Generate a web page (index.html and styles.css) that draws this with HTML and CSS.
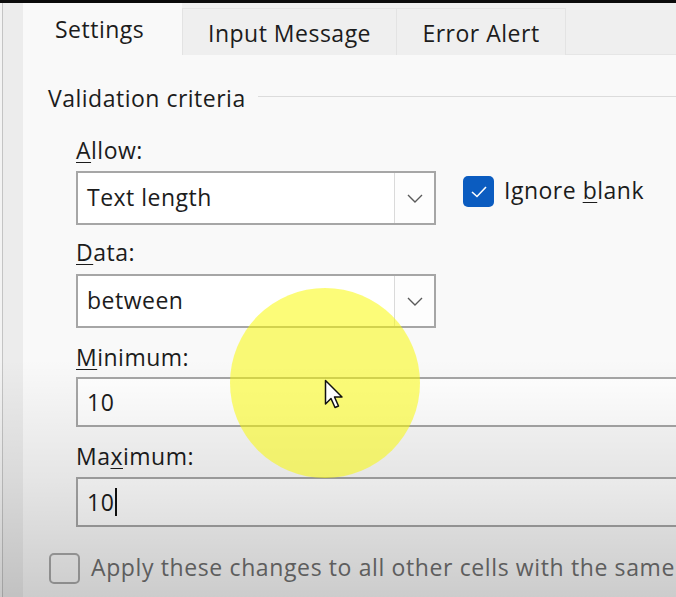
FILE: index.html
```html
<!DOCTYPE html>
<html>
<head>
<meta charset="utf-8">
<link rel="stylesheet" href="styles.css">
</head>
<body>
<div class="app">
  <div class="gutter"></div>
  <div class="main">
    <div class="tabs">
      <div class="tab active">Settings</div>
      <div class="tab tab-input">Input Message</div>
      <div class="tab tab-error">Error Alert</div>
      <div class="tab-fill"></div>
    </div>
    <div class="panel">
      <div class="legend"><span class="legend-text">Validation criteria</span><span class="legend-line"></span></div>
      <div class="form">
        <div class="label"><u>A</u>llow:</div>
        <div class="row">
          <div class="select"><span class="select-value">Text length</span><span class="drop"><svg width="16" height="9" viewBox="0 0 16 9"><path d="M1 1 L8 8 L15 1" fill="none" stroke="#5a5a5a" stroke-width="1.4"/></svg></span></div>
          <div class="check-wrap">
            <span class="check on"><svg width="18" height="13" viewBox="0 0 18 13"><path d="M2 7 L7 11.5 L16 2" fill="none" stroke="#fff" stroke-width="1.6"/></svg></span>
            <span class="check-label">Ignore <u>b</u>lank</span>
          </div>
        </div>
        <div class="label label-data"><u>D</u>ata:</div>
        <div class="row">
          <div class="select"><span class="select-value">between</span><span class="drop"><svg width="16" height="9" viewBox="0 0 16 9"><path d="M1 1 L8 8 L15 1" fill="none" stroke="#5a5a5a" stroke-width="1.4"/></svg></span></div>
        </div>
        <div class="label label-min"><u>M</u>inimum:</div>
        <div class="input"><span class="input-value">10</span></div>
        <div class="label label-max">Ma<u>x</u>imum:</div>
        <div class="input"><span class="input-value">10</span><span class="caret"></span></div>
      </div>
      <div class="apply">
        <span class="check off"></span>
        <span class="apply-label">Apply these changes to all other cells with the same</span>
      </div>
    </div>
  </div>
  <div class="shade"></div>
  <div class="spot"></div>
  <svg class="pointer" width="24" height="34" viewBox="0 0 24 34"><path d="M1.5 1.5 L1.5 25 L7 19.5 L11 28.5 L14.5 27 L10.5 18 L18 18 Z" fill="#fff" stroke="#111" stroke-width="1.5" stroke-linejoin="round"/></svg>
</div>
</body>
</html>
```

FILE: styles.css
```css
* { box-sizing: border-box; }
html, body { margin: 0; padding: 0; }
body {
  width: 676px;
  height: 597px;
  overflow: hidden;
  background: #0b0b0b;
  font-family: "Open Sans", "Noto Sans", sans-serif;
  color: #1c1c1c;
  letter-spacing: 0.5px;
}
.app {
  position: relative;
  display: flex;
  margin-top: 3px;
  height: 594px;
  overflow: hidden;
}
.gutter {
  width: 23px;
  flex: none;
  background: #ececec;
  border-left: 2px solid #f3f3f3;
  box-shadow: inset 1px 0 0 #c4c4c4;
}
.main {
  flex: 1;
  display: flex;
  flex-direction: column;
  min-width: 0;
}
.tabs {
  height: 52px;
  display: flex;
  align-items: flex-end;
  background: #efefef;
  flex: none;
}
.tab {
  height: 47px;
  display: flex;
  align-items: center;
  justify-content: center;
  font-size: 23px;
  background: #efefef;
  border: 1px solid #e3e3e3;
  border-bottom: none;
  padding-top: 2px;
}
.tab.active {
  width: 159px;
  height: 52px;
  background: #f9f9f9;
  border: none;
  justify-content: flex-start;
  padding-left: 32px;
  padding-top: 0;
}
.tab-input { width: 215px; }
.tab-error { width: 169px; border-left: none; }
.tab-fill {
  flex: 1;
  height: 1px;
  background: #e6e6e6;
}
.panel {
  flex: 1;
  background: #f9f9f9;
  padding: 28px 0 0 25px;
}
.legend {
  display: flex;
  align-items: center;
  height: 30px;
}
.legend-text {
  font-size: 23px;
  line-height: 30px;
  white-space: nowrap;
}
.legend-line {
  flex: 1;
  margin-left: 12px;
  margin-top: -3px;
  border-top: 1px solid #dcdcdc;
}
.form {
  padding-left: 28px;
  padding-top: 22px;
  display: flex;
  flex-direction: column;
}
.label {
  font-size: 23px;
  line-height: 30px;
  height: 30px;
  margin-bottom: 6px;
}
.label u, .check-label u { text-decoration-thickness: 1px; text-underline-offset: 3px; }
.label-data { margin-top: 12px; margin-bottom: 7px; }
.label-min { margin-top: 14px; margin-bottom: 5px; }
.label-max { margin-top: 14px; margin-bottom: 6px; }
.row {
  display: flex;
  align-items: flex-start;
}
.select {
  width: 360px;
  height: 54px;
  border: 2px solid #a6a6a6;
  background: #fff;
  display: flex;
  align-items: stretch;
}
.select-value {
  flex: 1;
  font-size: 23px;
  display: flex;
  align-items: center;
  padding-left: 9px;
  padding-bottom: 2px;
}
.drop {
  width: 40px;
  border-left: 1px solid #dadada;
  display: flex;
  align-items: center;
  justify-content: center;
  background: #fdfdfd;
}
.check-wrap {
  display: flex;
  align-items: center;
  margin-left: 27px;
  margin-top: 3px;
}
.check {
  width: 31px;
  height: 31px;
  border-radius: 5px;
  display: inline-flex;
  align-items: center;
  justify-content: center;
  flex: none;
}
.check.on { background: #0b5cc0; }
.check.off {
  border: 2px solid #a9a9a9;
  background: transparent;
}
.check-label {
  font-size: 23px;
  margin-left: 10px;
  padding-bottom: 2px;
}
.input {
  width: 640px;
  height: 50px;
  border: 2px solid #a6a6a6;
  border-right: none;
  background: #fff;
  display: flex;
  align-items: center;
  padding-left: 9px;
  font-size: 23px;
}
.caret {
  width: 2px;
  height: 28px;
  background: #111;
  margin-left: 1px;
}
.apply {
  display: flex;
  align-items: center;
  margin-top: 24px;
  margin-left: 1px;
}
.apply-label {
  font-size: 23px;
  color: #6f6f6f;
  margin-left: 11px;
  white-space: nowrap;
  padding-bottom: 2px;
  letter-spacing: 0.62px;
}
.shade {
  position: absolute;
  inset: 0;
  pointer-events: none;
  background: linear-gradient(to bottom, rgba(0,0,0,0) 0%, rgba(0,0,0,0) 60%, rgba(0,0,0,0.08) 80%, rgba(0,0,0,0.18) 100%);
}
.spot {
  position: absolute;
  left: 230px;
  top: 285px;
  width: 190px;
  height: 190px;
  border-radius: 50%;
  background: rgba(250, 250, 0, 0.53);
  pointer-events: none;
}
.pointer {
  position: absolute;
  left: 324px;
  top: 376px;
}
```
